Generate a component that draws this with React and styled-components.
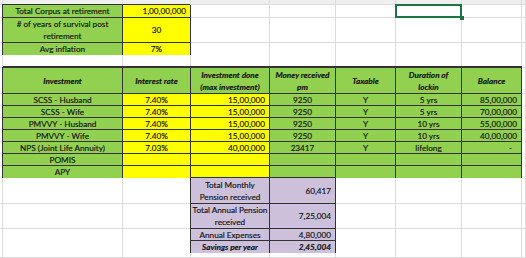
import React from 'react';
import styled, { createGlobalStyle, css } from 'styled-components';

const Global = createGlobalStyle`
  html, body { margin: 0; padding: 0; background: #ffffff; overflow: hidden; }
  #root { width: 526px; height: 258px; }
`;

const COLS = '3px 120px 68px 79px 66px 60px 66px 60px 1fr';

const FILLS = {
  green: '#92d050',
  yellow: '#ffff00',
  purple: '#ccc0da',
  strip: '#efefef',
};

const Sheet = styled.div`
  display: flex;
  flex-direction: column;
  width: 526px;
  height: 258px;
  font-family: Lato, "Open Sans", "Liberation Sans", sans-serif;
  font-size: 8.2px;
  color: #111111;
  -webkit-text-stroke: 0.15px #111111;
  background: #ffffff;
`;

const Row = styled.div`
  display: grid;
  grid-template-columns: ${COLS};
  height: ${(p) => (p.$h ? `${p.$h}px` : 'auto')};
  flex: ${(p) => (p.$h ? 'none' : '1')};
`;

const Cell = styled.div`
  box-sizing: border-box;
  display: flex;
  align-items: center;
  justify-content: ${(p) => (p.$align === 'right' ? 'flex-end' : 'center')};
  text-align: ${(p) => p.$align || 'center'};
  padding: 0 ${(p) => (p.$pad != null ? p.$pad : 2)}px 0 2px;
  line-height: 12px;
  white-space: nowrap;
  background: ${(p) => (p.$fill ? FILLS[p.$fill] : '#ffffff')};
  border-right: 1px solid #dcdcdc;
  border-bottom: 1px solid #dcdcdc;
  font-weight: ${(p) => (p.$bold ? 700 : 400)};
  font-style: ${(p) => (p.$italic ? 'italic' : 'normal')};
  ${(p) =>
    p.$fill &&
    p.$fill !== 'strip' &&
    css`
      border-right-color: #333333;
      border-bottom-color: #333333;
      box-shadow: -1px -1px 0 0 #333333 ${p.$thickTop ? ', 0 -2px 0 0 #333333' : ''};
    `}
  ${(p) =>
    p.$selected &&
    css`
      position: relative;
      &::after {
        content: '';
        position: absolute;
        left: -1px;
        top: -1px;
        right: -1px;
        bottom: -1px;
        border: 2px solid #217346;
      }
      &::before {
        content: '';
        position: absolute;
        right: -3px;
        bottom: -3px;
        width: 4px;
        height: 4px;
        background: #217346;
        z-index: 1;
      }
    `}
`;

const Edge = styled(Cell)`
  padding: 0;
`;

const Lines = ({ text }) =>
  text.split('\n').map((l, i, arr) => (
    <React.Fragment key={i}>
      {l}
      {i < arr.length - 1 && <br />}
    </React.Fragment>
  ));

const g = (text, o = {}) => ({ text, fill: 'green', ...o });
const y = (text, o = {}) => ({ text, fill: 'yellow', ...o });
const p = (text, o = {}) => ({ text, fill: 'purple', ...o });
const E = { text: '' };
const H = (text) => ({ text, fill: 'green', bold: true, italic: true, thickTop: true });

const invest = [
  ['SCSS - Husband', '7.40%', '15,00,000', '9250', 'Y', '5 yrs', '85,00,000'],
  ['SCSS - Wife', '7.40%', '15,00,000', '9250', 'Y', '5 yrs', '70,00,000'],
  ['PMVVY - Husband', '7.40%', '15,00,000', '9250', 'Y', '10 yrs', '55,00,000'],
  ['PMVVY - Wife', '7.40%', '15,00,000', '9250', 'Y', '10 yrs', '40,00,000'],
  ['NPS (Joint Life Annuity)', '7.03%', '40,00,000', '23417', 'Y', 'lifelong', '-'],
  ['POMIS', '', '', '', '', '', ''],
  ['APY', '', '', '', '', '', ''],
];

const rows = [
  { h: 5, strip: true, cells: [E, E, E, E, E, E, E] },
  {
    h: 13,
    cells: [g('Total Corpus at retirement'), y('1,00,00,000', { align: 'right', pad: 4 }), E, E, E, { text: '', selected: true }, E],
  },
  { h: 25, cells: [g('# of years of survival post\nretirement'), y('30'), E, E, E, E, E] },
  { h: 12, cells: [g('Avg inflation'), y('7%'), E, E, E, E, E] },
  { h: 13, cells: [E, E, E, E, E, E, E] },
  {
    h: 26,
    cells: [
      H('Investment'),
      H('Interest rate'),
      H('Investment done\n(max investment)'),
      H('Money received\npm'),
      H('Taxable'),
      H('Duration of\nlockin'),
      H('Balance'),
    ],
  },
  ...invest.map((r) => ({
    h: 12,
    cells: [
      g(r[0]),
      y(r[1]),
      y(r[2], { align: 'right', pad: 4 }),
      g(r[3]),
      g(r[4]),
      g(r[5]),
      r[6] === '-' ? g(r[6], { align: 'right', pad: 9 }) : g(r[6], { align: 'right', pad: 4 }),
    ],
  })),
  { h: 26, cells: [E, E, p('Total Monthly\nPension received'), p('60,417', { align: 'right', pad: 4 }), E, E, E] },
  { h: 25, cells: [E, E, p('Total Annual Pension\nreceived'), p('7,25,004', { align: 'right', pad: 4 }), E, E, E] },
  { h: 12, cells: [E, E, p('Annual Expenses'), p('4,80,000', { align: 'right', pad: 4 }), E, E, E] },
  {
    h: 12,
    cells: [
      E,
      E,
      p('Savings per year', { bold: true, italic: true }),
      p('2,45,004', { align: 'right', pad: 4, bold: true, italic: true }),
      E,
      E,
      E,
    ],
  },
  { h: 0, cells: [E, E, E, E, E, E, E] },
];

export default function App() {
  return (
    <>
      <Global />
      <Sheet>
        {rows.map((r, ri) => (
          <Row key={ri} $h={r.h}>
            <Edge $fill={r.strip ? 'strip' : undefined} />
            {r.cells.map((c, ci) => (
              <Cell
                key={ci}
                $fill={r.strip ? 'strip' : c.fill}
                $align={c.align}
                $pad={c.pad}
                $bold={c.bold}
                $italic={c.italic}
                $thickTop={c.thickTop}
                $selected={c.selected}
              >
                {c.text && <span><Lines text={c.text} /></span>}
              </Cell>
            ))}
            <Edge $fill={r.strip ? 'strip' : undefined} />
          </Row>
        ))}
      </Sheet>
    </>
  );
}
